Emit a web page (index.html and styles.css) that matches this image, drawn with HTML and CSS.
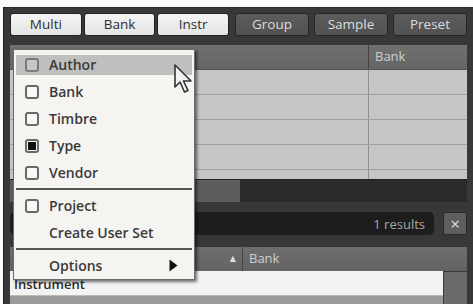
FILE: index.html
```html
<!DOCTYPE html>
<html>
<head>
<meta charset="utf-8">
<link rel="stylesheet" href="styles.css">
</head>
<body>
<div class="frame">
  <div class="tabs">
    <div class="group light">
      <div class="btn l">Multi</div>
      <div class="btn l">Bank</div>
      <div class="btn l">Instr</div>
    </div>
    <div class="group dark">
      <div class="btn d">Group</div>
      <div class="btn d">Sample</div>
      <div class="btn d">Preset</div>
    </div>
  </div>

  <div class="table-up">
    <div class="thead">
      <div class="c1"></div>
      <div class="c2">Bank</div>
    </div>
    <div class="tbody">
      <div class="row"><div class="c1"></div><div class="c2"></div></div>
      <div class="row"><div class="c1"></div><div class="c2"></div></div>
      <div class="row"><div class="c1"></div><div class="c2"></div></div>
      <div class="row"><div class="c1"></div><div class="c2"></div></div>
      <div class="row"><div class="c1"></div><div class="c2"></div></div>
    </div>
  </div>

  <div class="hscroll"><div class="thumb"></div></div>

  <div class="search">
    <div class="field">1 results</div>
    <div class="xbtn">×</div>
  </div>

  <div class="table-low">
    <div class="lhead">
      <div class="lc1">▲</div>
      <div class="lc2">Bank</div>
    </div>
    <div class="lrow">
      <div class="lcell">Instrument</div>
      <div class="vsb"></div>
    </div>
    <div class="lrest">
      <div class="lcell2"></div>
      <div class="vsb"></div>
    </div>
  </div>
</div>

<div class="menu">
  <div class="item hl"><span class="cb"></span><span class="lbl">Author</span></div>
  <div class="item"><span class="cb"></span><span class="lbl">Bank</span></div>
  <div class="item"><span class="cb"></span><span class="lbl">Timbre</span></div>
  <div class="item"><span class="cb on"></span><span class="lbl">Type</span></div>
  <div class="item"><span class="cb"></span><span class="lbl">Vendor</span></div>
  <div class="sep"></div>
  <div class="item"><span class="cb"></span><span class="lbl">Project</span></div>
  <div class="item"><span class="nocb"></span><span class="lbl">Create User Set</span></div>
  <div class="sep"></div>
  <div class="item"><span class="nocb"></span><span class="lbl">Options</span>
    <svg class="sub" width="9" height="13" viewBox="0 0 9 13"><polygon points="0.5,0.5 8.5,6.5 0.5,12.5" fill="#111"/></svg>
  </div>
</div>

<svg class="cursor" width="20" height="30" viewBox="0 0 20 30">
  <polygon points="1,1 1,23 6,18 10.5,28 14,26.5 9.5,17 17,17" fill="#f2f2f2" stroke="#333" stroke-width="1.6" stroke-linejoin="round"/>
</svg>
</body>
</html>
```
FILE: styles.css
```css
* { box-sizing: border-box; }
html, body { margin: 0; padding: 0; }
body {
  background: #fafafa;
  width: 473px;
  height: 304px;
  overflow: hidden;
  position: relative;
  font-family: "Open Sans", "DejaVu Sans", sans-serif;
}
.frame {
  margin: 7px 0 0 3px;
  height: 297px;
  background: #383838;
  border-left: 1px solid #222;
  border-top: 1px solid #2a2a2a;
  padding: 5px 6px 0 6px;
  display: flex;
  flex-direction: column;
}
.tabs {
  display: flex;
  height: 23px;
  gap: 6px;
}
.group { display: flex; }
.group.light { width: 219px; gap: 2px; }
.group.dark { flex: 1; gap: 5px; }
.btn {
  flex: 1;
  border-radius: 3px;
  display: flex;
  align-items: center;
  justify-content: center;
  font-size: 13.5px;
  line-height: 1;
}
.btn.l {
  background: linear-gradient(#f4f4f4, #e4e4e4);
  color: #2e2e2e;
  border: 1px solid #222;
}
.btn.d {
  background: linear-gradient(#5c5c5c, #525252);
  color: #dcdcdc;
  border: 1px solid #262626;
}
.table-up {
  margin-top: 9px;
  height: 134px;
  display: flex;
  flex-direction: column;
  background: #c4c6c8;
}
.thead {
  height: 25px;
  display: flex;
  background: linear-gradient(#707070, #656565);
  border-bottom: 1px solid #555;
}
.thead .c1 { width: 359px; border-right: 1px solid #444; }
.thead .c2 {
  flex: 1;
  color: #cfcfcf;
  font-size: 13px;
  line-height: 22px;
  padding-left: 6px;
}
.tbody { flex: 1; overflow: hidden; }
.row {
  height: 25px;
  display: flex;
  border-bottom: 1px solid #9fa1a3;
}
.row .c1 { width: 359px; border-right: 1px solid #8e9092; }
.row .c2 { flex: 1; }
.hscroll {
  height: 23px;
  background: #2b2b2b;
  border-top: 1px solid #222;
}
.thumb {
  width: 230px;
  height: 100%;
  background: #5b5d5f;
}
.search {
  margin-top: 10px;
  height: 23px;
  display: flex;
  gap: 9px;
}
.field {
  flex: 1;
  background: #1d1d1d;
  border-radius: 5px;
  color: #a8a8a8;
  font-size: 13px;
  display: flex;
  align-items: center;
  justify-content: flex-end;
  padding-right: 9px;
}
.xbtn {
  width: 24px;
  background: #5e5e5e;
  border: 1px solid #2a2a2a;
  border-radius: 2px;
  color: #dedede;
  font-size: 17px;
  display: flex;
  align-items: center;
  justify-content: center;
  line-height: 1;
}
.table-low {
  margin-top: 12px;
  flex: 1;
  display: flex;
  flex-direction: column;
}
.lhead {
  height: 24px;
  display: flex;
  background: linear-gradient(#6e6e6e, #636363);
}
.lc1 {
  width: 233px;
  border-right: 1px solid #444;
  color: #dddddd;
  font-size: 8px;
  line-height: 22px;
  text-align: right;
  padding-right: 6px;
}
.lc2 {
  flex: 1;
  color: #cfcfcf;
  font-size: 13px;
  line-height: 22px;
  padding-left: 6px;
}
.lrow {
  height: 25px;
  display: flex;
}
.lcell {
  width: 433px;
  background: #f3f3f3;
  color: #2a2a2a;
  font-size: 13px;
  font-weight: 600;
  line-height: 16px;
  padding: 5px 0 0 4px;
  border-bottom: 1px solid #bbb;
}
.vsb {
  flex: 1;
  background: #6a6a6a;
  border-left: 1px solid #3a3a3a;
  border-top: 1px solid #3a3a3a;
}
.lrest {
  flex: 1;
  display: flex;
}
.lcell2 {
  width: 433px;
  background: #9a9a9a;
}
.lrest .vsb { border-top: none; }

.menu {
  position: absolute;
  left: 13px;
  top: 49px;
  width: 182px;
  height: 231px;
  background: #f6f4f1;
  border: 1px solid #6a6a6a;
  box-shadow: 2px 2px 3px rgba(0, 0, 0, 0.55);
  padding-top: 1px;
}
.item {
  height: 27px;
  display: flex;
  align-items: center;
  position: relative;
  font-size: 14px;
  font-weight: 600;
  color: #3a3a3a;
}
.item.hl::before {
  content: "";
  position: absolute;
  left: 2px;
  right: 2px;
  top: 4px;
  bottom: 3px;
  background: #bfbfbd;
}
.cb {
  position: relative;
  width: 14px;
  height: 14px;
  margin-left: 11px;
  border: 2px solid #6a6a6a;
  border-radius: 3px;
  background: #f8f8f8;
  display: flex;
  align-items: center;
  justify-content: center;
}
.item.hl .cb { background: #c6c6c4; border-color: #7a7a7a; }
.cb.on::after {
  content: "";
  width: 8px;
  height: 8px;
  background: #111;
}
.nocb { width: 14px; margin-left: 11px; }
.lbl {
  position: relative;
  margin-left: 10px;
}
.sub {
  position: absolute;
  left: 155px;
  top: 7px;
}
.sep {
  height: 6px;
  display: flex;
  align-items: center;
  padding: 0 2px;
}
.sep::before {
  content: "";
  flex: 1;
  height: 2px;
  background: #555;
}
.cursor {
  position: absolute;
  left: 174px;
  top: 64px;
}
```
